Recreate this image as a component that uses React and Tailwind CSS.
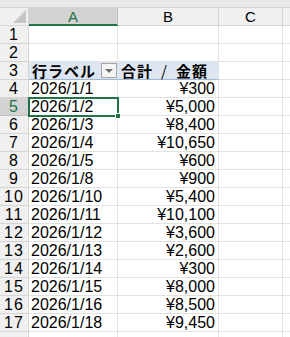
import React from 'react';

const ROWS = [
  ['', ''],
  ['', ''],
  null,
  ['2026/1/1', '¥300'],
  ['2026/1/2', '¥5,000'],
  ['2026/1/3', '¥8,400'],
  ['2026/1/4', '¥10,650'],
  ['2026/1/5', '¥600'],
  ['2026/1/8', '¥900'],
  ['2026/1/10', '¥5,400'],
  ['2026/1/11', '¥10,100'],
  ['2026/1/12', '¥3,600'],
  ['2026/1/13', '¥2,600'],
  ['2026/1/14', '¥300'],
  ['2026/1/15', '¥8,000'],
  ['2026/1/16', '¥8,500'],
  ['2026/1/18', '¥9,450'],
  ['', ''],
];

const FONT = { fontFamily: '"Liberation Sans", "Noto Sans CJK JP", sans-serif' };
const JP = { fontFamily: '"Noto Sans CJK JP", sans-serif' };

export default function App() {
  return (
    <div className="w-[290px] h-[337px] overflow-hidden bg-white text-[16px] text-black leading-none" style={FONT}>
      <div className="h-[8px] bg-[#e9e9e9] border-b border-[#d4d4d4]" />
      <div className="grid grid-cols-[29px_89px_101px_64px_1fr] h-[18px] bg-[#f0f0f0]">
        <div className="relative border-r border-b border-[#d4d4d4]">
          <div className="absolute right-[2px] bottom-[2px] w-0 h-0 border-l-[13px] border-l-transparent border-b-[13px] border-b-[#c6c6c6]" />
        </div>
        <div className="flex items-center justify-center bg-[#d3d3d3] border-r border-[#c0c0c0] border-b-2 border-b-[#217346] text-[#217346] text-[15px]">A</div>
        <div className="flex items-center justify-center border-r border-b border-[#d4d4d4] text-[15px]">B</div>
        <div className="flex items-center justify-center border-r border-b border-[#d4d4d4] text-[15px]">C</div>
        <div className="border-b border-[#d4d4d4]" />
      </div>
      <div className="relative">
        {ROWS.map((r, i) => {
          const n = i + 1;
          const sel = n === 5;
          return (
            <div key={n} className="grid grid-cols-[29px_89px_101px_64px_1fr] h-[18px]">
              <div className={`flex items-center justify-center border-b border-r ${sel ? 'bg-[#d3d3d3] text-[#217346] border-b-[#c0c0c0] border-r-[#217346]' : 'bg-[#f0f0f0] border-[#d4d4d4]'}`}>
                {n < 18 && <span className="tracking-[1px]">{n}</span>}
              </div>
              {r === null ? (
                <>
                  <div className="relative flex items-center pl-[3px] bg-[#dde5f0] border-b border-[#9fb6d6] font-bold" style={JP}>
                    <span className="text-[15px] leading-none tracking-[1px]">行ラベル</span>
                    <div className="absolute right-[1px] top-[1px] w-[16px] h-[15px] bg-[#f4f4f4] border border-[#a6a6a6] flex items-center justify-center">
                      <div className="w-0 h-0 border-l-[4px] border-r-[4px] border-t-[4px] border-l-transparent border-r-transparent border-t-[#6e6e6e]" />
                    </div>
                  </div>
                  <div className="flex items-center pl-[3px] bg-[#dde5f0] border-b border-r border-b-[#9fb6d6] border-r-[#dde5f0] font-bold whitespace-nowrap text-[15px] leading-none tracking-[1px]" style={JP}>
                    <span>合計</span>
                    <span className="mx-[8px] font-normal">/</span>
                    <span>金額</span>
                  </div>
                </>
              ) : (
                <>
                  <div className="flex items-center pl-[2px] border-r border-b border-[#e1e1e1] whitespace-nowrap">{r[0]}</div>
                  <div className="flex items-center justify-end pr-[3px] border-r border-b border-[#e1e1e1] whitespace-nowrap">{r[1]}</div>
                </>
              )}
              <div className="border-r border-b border-[#e1e1e1]" />
              <div className="border-b border-[#e1e1e1]" />
            </div>
          );
        })}
        <div className="absolute left-[28px] top-[71px] w-[91px] h-[20px] border-2 border-[#217346] pointer-events-none">
          <div className="absolute -right-[4px] -bottom-[4px] w-[6px] h-[6px] bg-[#217346] border border-white" />
        </div>
      </div>
    </div>
  );
}
